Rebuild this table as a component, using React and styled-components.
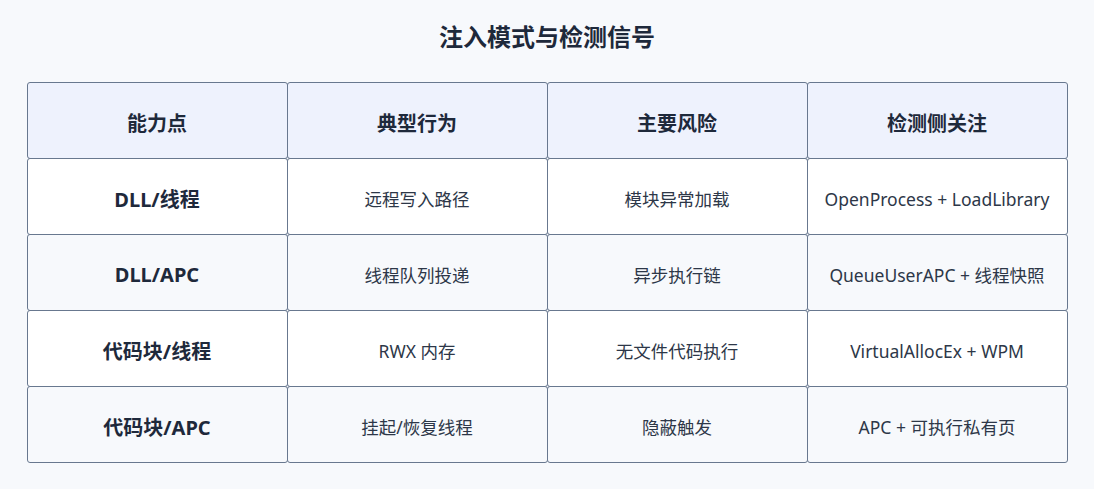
import { createGlobalStyle, styled } from "styled-components";

const GlobalStyle = createGlobalStyle`
  html, body {
    margin: 0;
    padding: 0;
    background: #f7f9fc;
  }
  body {
    font-family: "Noto Sans", "Noto Sans CJK SC", sans-serif;
    color: #1e293b;
  }
`;

const Page = styled.main`
  display: flex;
  flex-direction: column;
  align-items: center;
  padding: 20px 0 26px;
`;

const Title = styled.h1`
  margin: 0 0 28px 0;
  font-size: 24px;
  line-height: 34px;
  font-weight: 700;
  color: #1e293b;
`;

const Table = styled.div`
  display: grid;
  grid-template-columns: repeat(4, 260px);
  grid-auto-rows: 76px;
  padding: 0 1px 1px 0;
`;

const Cell = styled.div`
  margin: 0 -1px -1px 0;
  padding-top: 4px;
  display: flex;
  align-items: center;
  justify-content: center;
  border: 1px solid #68788f;
  border-radius: 3px;
  background: ${(p) => (p.$head ? "#eef2fd" : p.$alt ? "#f7f9fc" : "#ffffff")};
  font-size: ${(p) => (p.$strong ? "20px" : "17.5px")};
  font-weight: ${(p) => (p.$strong ? 700 : 400)};
  color: ${(p) => (p.$strong ? "#1e293b" : "#2d3748")};
  white-space: nowrap;
`;

const headers = ["能力点", "典型行为", "主要风险", "检测侧关注"];

const rows = [
  ["DLL/线程", "远程写入路径", "模块异常加载", "OpenProcess + LoadLibrary"],
  ["DLL/APC", "线程队列投递", "异步执行链", "QueueUserAPC + 线程快照"],
  ["代码块/线程", "RWX 内存", "无文件代码执行", "VirtualAllocEx + WPM"],
  ["代码块/APC", "挂起/恢复线程", "隐蔽触发", "APC + 可执行私有页"],
];

const App = () => {
  return (
    <>
      <GlobalStyle />
      <Page>
        <Title>注入模式与检测信号</Title>
        <Table>
          {headers.map((h) => (
            <Cell key={h} $head $strong>
              {h}
            </Cell>
          ))}
          {rows.map((row, i) =>
            row.map((text, j) => (
              <Cell key={`${i}-${j}`} $alt={i % 2 === 1} $strong={j === 0}>
                {text}
              </Cell>
            ))
          )}
        </Table>
      </Page>
    </>
  );
};

export default App;
